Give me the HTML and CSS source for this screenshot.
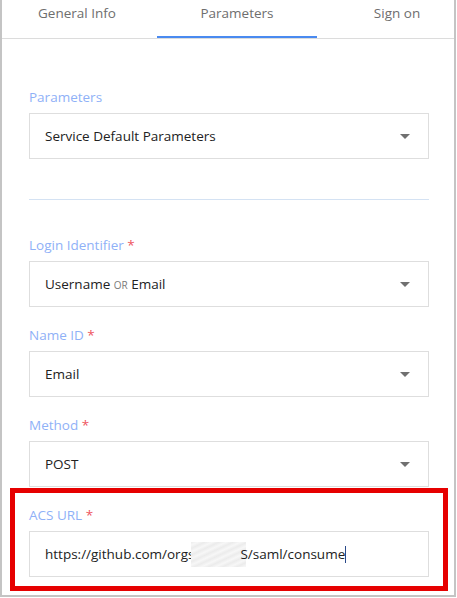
FILE: index.html
```html
<!DOCTYPE html>
<html lang="en">
<head>
    <meta charset="UTF-8">
    <meta name="viewport" content="width=device-width, initial-scale=1.0">
    <title>SAML Application - Parameters</title>
    <link rel="stylesheet" href="styles.css">
</head>
<body>
    <div class="frame">
        <div class="tabs">
            <div class="tab">General Info</div>
            <div class="tab active">Parameters</div>
            <div class="tab">Sign on</div>
        </div>

        <div class="form">
            <div class="field">
                <label class="label">Parameters</label>
                <div class="select">
                    <span>Service Default Parameters</span>
                    <span class="caret"></span>
                </div>
            </div>

            <div class="divider"></div>

            <div class="field">
                <label class="label">Login Identifier <span class="req">*</span></label>
                <div class="select">
                    <span>Username <span class="or">or</span> Email</span>
                    <span class="caret"></span>
                </div>
            </div>

            <div class="field">
                <label class="label">Name ID <span class="req">*</span></label>
                <div class="select">
                    <span>Email</span>
                    <span class="caret"></span>
                </div>
            </div>

            <div class="field">
                <label class="label">Method <span class="req">*</span></label>
                <div class="select">
                    <span>POST</span>
                    <span class="caret"></span>
                </div>
            </div>

            <div class="highlight">
                <div class="field last">
                    <label class="label">ACS URL <span class="req">*</span></label>
                    <div class="input">
                        <span>https://github.com/orgs</span><span class="redact"></span><span>S/saml/consume</span><span class="cursor"></span>
                    </div>
                </div>
            </div>
        </div>
    </div>
</body>
</html>
```

FILE: styles.css
```css
body {
    margin: 0;
    font-family: "Open Sans", "Noto Sans", sans-serif;
    background: #fff;
}
.frame {
    width: 456px;
    height: 597px;
    box-sizing: border-box;
    border: 2px solid #c4c4c4;
    border-top: none;
    overflow: hidden;
}
.tabs {
    display: flex;
    margin-left: -5px;
    border-bottom: 1px solid #dcdcdc;
}
.tab {
    flex: 0 0 160px;
    height: 38px;
    box-sizing: border-box;
    padding-top: 4px;
    text-align: center;
    font-size: 13.5px;
    color: #6e6e6e;
}
.tab.active {
    border-bottom: 2px solid #4a8af0;
}
.form {
    padding: 48px 25px 0 27px;
}
.field {
    margin-bottom: 18px;
}
.label {
    display: block;
    height: 20px;
    line-height: 20px;
    margin-bottom: 6px;
    font-size: 13.5px;
    color: #8fb1f7;
}
.req {
    color: #ee5560;
}
.select,
.input {
    height: 46px;
    box-sizing: border-box;
    border: 1px solid #dedede;
    display: flex;
    align-items: center;
    padding: 0 18px 0 15px;
    font-size: 13.5px;
    color: #222;
}
.select {
    justify-content: space-between;
}
.caret {
    width: 0;
    height: 0;
    border-left: 5px solid transparent;
    border-right: 5px solid transparent;
    border-top: 5px solid #707070;
    margin-top: 1px;
}
.or {
    font-size: 10px;
    text-transform: uppercase;
    color: #7a7a7a;
}
.divider {
    height: 1px;
    background: #d4e2f3;
    margin: 40px 0 35px;
}
.highlight {
    margin: -17px -19px 0;
    padding: 12px 14px 9px;
    border: 5px solid #e60000;
}
.field.last {
    margin-bottom: 0;
}
.redact {
    display: inline-block;
    width: 55px;
    height: 25px;
    margin: 0 -6px 0 -3px;
    background: repeating-linear-gradient(155deg, #ececec 0, #f7f7f7 3px, #ebebeb 6px);
}
.cursor {
    display: inline-block;
    width: 1px;
    height: 17px;
    background: #2a4a8a;
}
```
